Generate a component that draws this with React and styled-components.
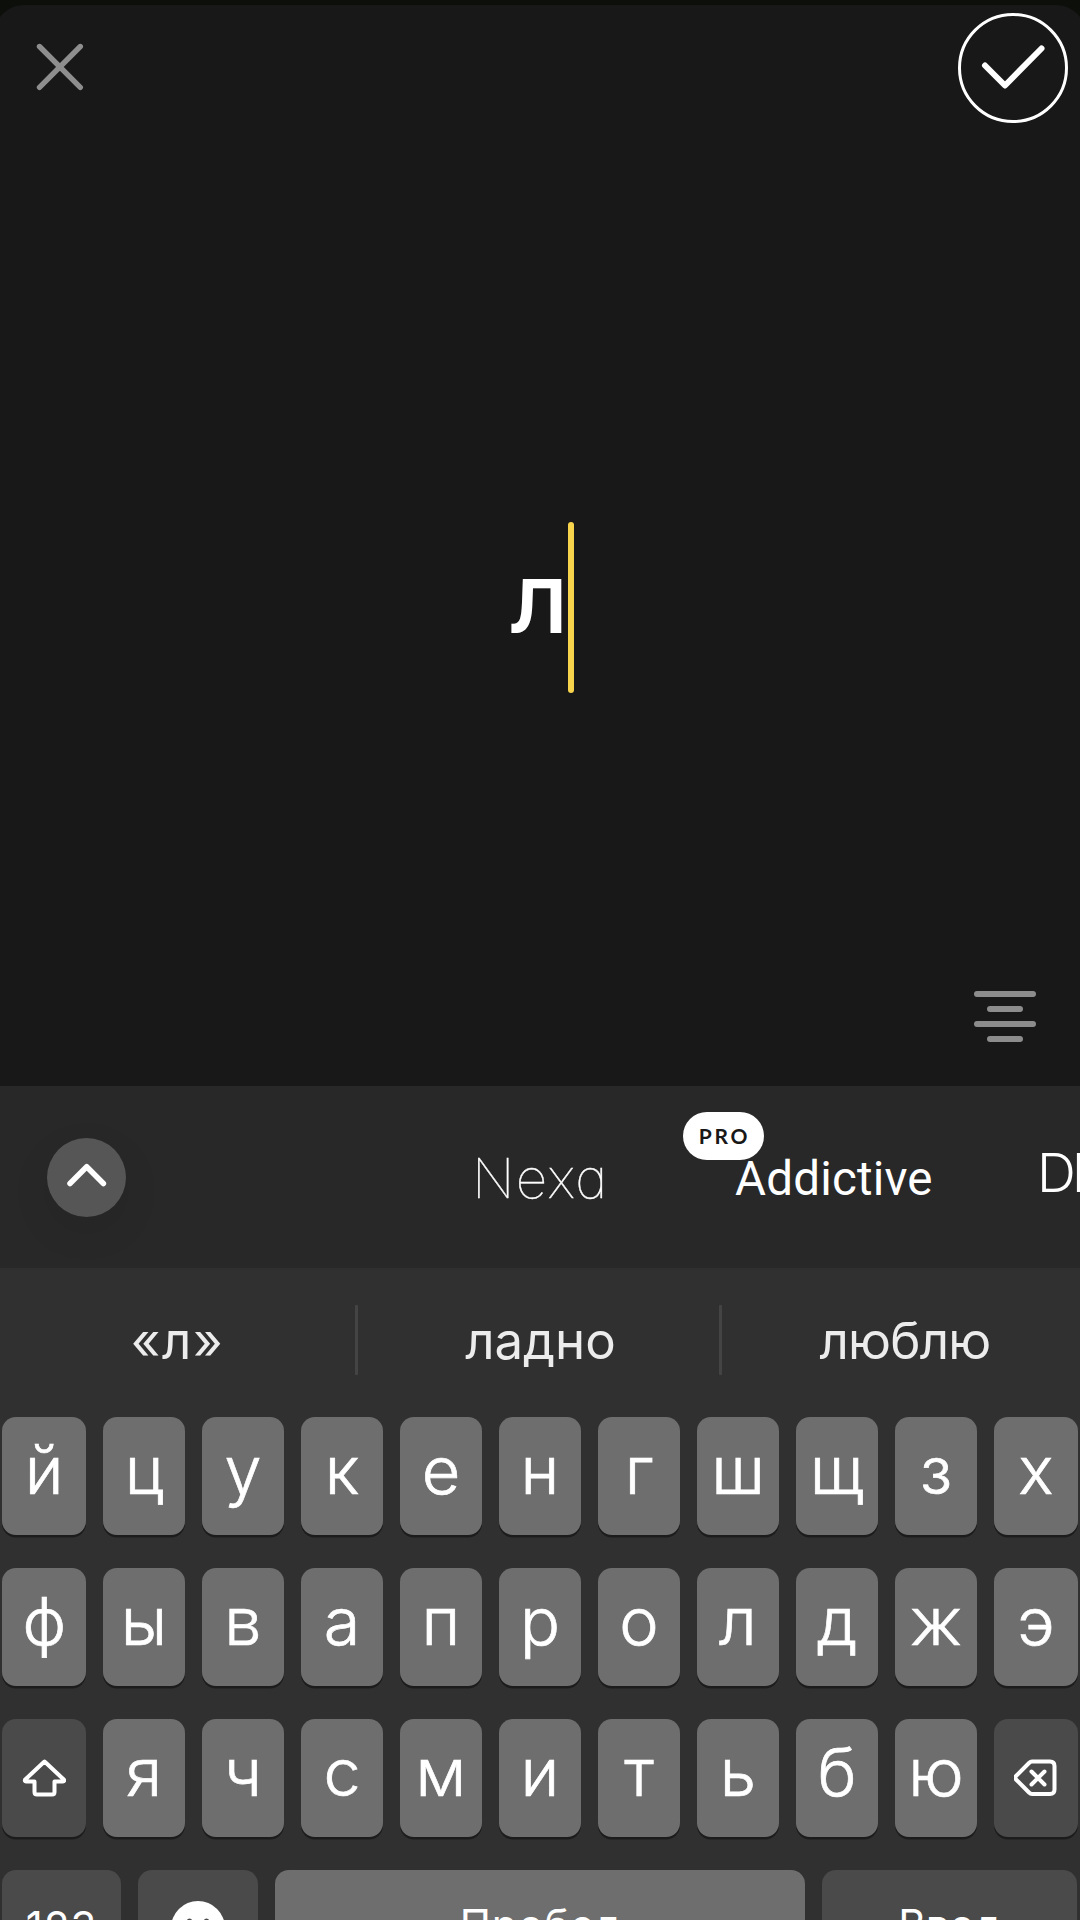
import React from "react";
import styled, { createGlobalStyle } from "styled-components";

const GlobalStyle = createGlobalStyle`
  * { box-sizing: border-box; }
  body { margin: 0; background: #0d0f0a; }
`;

const Screen = styled.div`
  width: 1080px;
  height: 1920px;
  padding-top: 5px;
  overflow: hidden;
  display: flex;
  flex-direction: column;
  background: #0d0f0a;
  color: #fff;
  font-family: Inter, "Noto Sans", sans-serif;
`;

const Sheet = styled.main`
  flex: 0 0 1081px;
  margin: 0 -6px;
  padding: 0 6px;
  border-radius: 30px 30px 0 0;
  background: #181818;
  display: flex;
  flex-direction: column;
`;

const TopBar = styled.header`
  height: 118px;
  padding: 8px 12px 0 36px;
  display: flex;
  justify-content: space-between;
  align-items: flex-start;
`;

const CloseButton = styled.button`
  margin: 30px 0 0;
  padding: 0;
  border: 0;
  background: none;
  line-height: 0;
`;

const ConfirmButton = styled.button`
  width: 110px;
  height: 110px;
  padding: 0;
  border: 3px solid #fff;
  border-radius: 50%;
  background: none;
  line-height: 0;
`;

const Stage = styled.section`
  flex: 1;
  display: flex;
  justify-content: center;
  align-items: flex-start;
  padding: 399px 0 0 5px;
`;

const TypedText = styled.span`
  font-size: 99px;
  font-weight: 500;
  line-height: 151px;
`;

const Caret = styled.span`
  width: 6px;
  height: 171px;
  border-radius: 3px;
  background: #f8d34c;
`;

const AlignRow = styled.div`
  height: 95px;
  padding-right: 44px;
  display: flex;
  justify-content: flex-end;
`;

const AlignButton = styled.button`
  width: 62px;
  height: 51px;
  padding: 0;
  border: 0;
  background: none;
  display: flex;
  flex-direction: column;
  align-items: center;
  justify-content: space-between;
`;

const AlignLine = styled.span`
  width: ${(p) => (p.$short ? 36 : 62)}px;
  height: 6px;
  border-radius: 3px;
  background: #8c8c8c;
`;

const FontBar = styled.nav`
  flex: 0 0 182px;
  padding-left: 47px;
  display: flex;
  align-items: flex-start;
  background: #282828;
`;

const ExpandButton = styled.button`
  flex: 0 0 79px;
  height: 79px;
  margin-top: 52px;
  padding: 0;
  border: 0;
  border-radius: 50%;
  background: #565656;
  box-shadow: 0 14px 40px rgba(0, 0, 0, 0.08);
  line-height: 0;
`;

const FontList = styled.div`
  flex: 1;
  height: 182px;
  padding-left: 346px;
  display: flex;
  overflow: hidden;
  white-space: nowrap;
`;

const FontItem = styled.div`
  position: relative;
  flex: 0 0 ${(p) => p.$width}px;
  line-height: ${(p) => p.$line}px;
`;

const NexaName = styled.span`
  font-size: 55px;
  font-weight: 100;
  font-feature-settings: "cv11";
  letter-spacing: 1.4px;
  -webkit-text-stroke: 0.4px #fff;
`;

const AddictiveName = styled.span`
  font-family: Roboto, sans-serif;
  font-size: 47.5px;
  letter-spacing: 0.2px;
`;

const DinName = styled.span`
  font-size: 54px;
  font-weight: 300;
  letter-spacing: -4px;
`;

const ProBadge = styled.span`
  position: absolute;
  left: -52.5px;
  top: 25.5px;
  width: 81px;
  height: 48px;
  padding-left: 3px;
  border-radius: 24px;
  background: #fff;
  color: #181818;
  font: 700 21px/47px Lato, sans-serif;
  letter-spacing: 2.7px;
  text-align: center;
`;

const Keyboard = styled.section`
  flex: 0 0 652px;
  background: #303030;
`;

const Suggestions = styled.div`
  height: 149px;
  padding: 37px 0 42px;
  display: grid;
  grid-template-rows: 70px;
  grid-template-columns: 355px 3px 361px 3px 358px;
`;

const Suggestion = styled.span`
  padding-left: ${(p) => p.$shift || 0}px;
  color: #ececec;
  font-size: 51px;
  line-height: 72px;
  text-align: center;
  letter-spacing: ${(p) => p.$track || 0}px;
`;

const Divider = styled.span`
  border-radius: 1px;
  background: #444;
`;

const KeyRows = styled.div`
  padding-left: 2.4px;
  display: flex;
  flex-direction: column;
  gap: 33.3px;
`;

const KeyRow = styled.div`
  display: grid;
  grid-template-columns: 83.6px repeat(9, 82px) 84px;
  column-gap: 17px;
`;

const BottomRow = styled(KeyRow)`
  grid-template-columns: 118.6px 120px 530px 255.5px;
`;

const Key = styled.button`
  height: 117.7px;
  padding: 0;
  border: 0;
  border-radius: 14px;
  background: ${(p) => (p.$dark ? "#4a4a4a" : "#6e6e6e")};
  box-shadow: 0 2.5px 0 #1c1c1c;
  color: #fff;
  display: flex;
  justify-content: center;
  align-items: flex-start;
  font: 300 66.5px/107px Inter, "Noto Sans", sans-serif;
  -webkit-text-stroke: 0.7px #fff;
`;

const WordKey = styled(Key)`
  font-size: 42px;
  font-weight: 400;
  line-height: ${(p) => p.$line || 110}px;
  letter-spacing: ${(p) => p.$track || 0}px;
  -webkit-text-stroke: 0;
`;

const IconSlot = styled.span`
  margin-top: ${(p) => p.$top}px;
  line-height: 0;
`;

function ShiftIcon() {
  return (
    <svg width="44" height="40" viewBox="0 0 44 40" fill="none" stroke="#fff" strokeWidth="4" strokeLinejoin="round">
      <path d="M22.500 3.500 L42 21.800 Q42.600 23.500 41 23.500 H32.500 V34 Q32.500 36.500 30 36.500 H15 Q12.500 36.500 12.500 34 V23.500 H4 Q2.400 23.500 3 21.800 Z" />
    </svg>
  );
}

function BackspaceIcon() {
  return (
    <svg width="44" height="40" viewBox="0 0 44 40" fill="none" stroke="#fff" strokeWidth="4" strokeLinejoin="round" strokeLinecap="round">
      <path d="M18 3.500 H36 Q40.500 3.500 40.500 8 V31.500 Q40.500 36 36 36 H18 Q16.500 36 15 34.500 L2 21.500 Q0.500 19.750 2 18 L15 5 Q16.500 3.500 18 3.500 Z" />
      <path d="M17.500 13.500 L30.500 26.500 M30.500 13.500 L17.500 26.500" />
    </svg>
  );
}

function SmileIcon() {
  return (
    <svg width="54" height="54" viewBox="0 0 54 54">
      <circle cx="27" cy="27" r="27" fill="#fff" />
      <ellipse cx="18.500" cy="21.500" rx="3" ry="4" fill="#4a4a4a" />
      <ellipse cx="35.500" cy="21.500" rx="3" ry="4" fill="#4a4a4a" />
      <path d="M14 33 Q27 46 40 33" fill="none" stroke="#4a4a4a" strokeWidth="3" />
    </svg>
  );
}

const FIRST_ROW = [..."йцукенгшщзх"];
const SECOND_ROW = [..."фывапролджэ"];
const THIRD_ROW = [..."ячсмитьбю"];

export default function App() {
  return (
    <Screen>
      <GlobalStyle />
      <Sheet>
        <TopBar>
          <CloseButton aria-label="Закрыть">
            <svg width="48" height="48" viewBox="0 0 48 48" stroke="#8e8e8e" strokeWidth="5.400" strokeLinecap="round">
              <path d="M3.500 3.500 L44.300 44.300 M44.300 3.500 L3.500 44.300" />
            </svg>
          </CloseButton>
          <ConfirmButton aria-label="Готово">
            <svg width="104" height="104" viewBox="0 0 104 104" fill="none" stroke="#fff" strokeWidth="6" strokeLinecap="round" strokeLinejoin="round">
              <path d="M24 49.500 L44 69.500 L80.500 32.500" />
            </svg>
          </ConfirmButton>
        </TopBar>
        <Stage>
          <TypedText>л</TypedText>
          <Caret />
        </Stage>
        <AlignRow>
          <AlignButton aria-label="Выравнивание">
            <AlignLine />
            <AlignLine $short />
            <AlignLine />
            <AlignLine $short />
          </AlignButton>
        </AlignRow>
      </Sheet>

      <FontBar>
        <ExpandButton aria-label="Развернуть">
          <svg width="79" height="79" viewBox="0 0 79 79" fill="none" stroke="#fff" strokeWidth="5.500" strokeLinecap="round" strokeLinejoin="round">
            <path d="M23 45.500 L39.700 28.700 L56.400 45.500" />
          </svg>
        </ExpandButton>
        <FontList>
          <FontItem $width={263} $line={184}>
            <NexaName>Nexa</NexaName>
          </FontItem>
          <FontItem $width={302} $line={186}>
            <AddictiveName>Addictive</AddictiveName>
            <ProBadge>PRO</ProBadge>
          </FontItem>
          <FontItem $width={90} $line={174}>
            <DinName>DI</DinName>
          </FontItem>
        </FontList>
      </FontBar>

      <Keyboard>
        <Suggestions>
          <Suggestion $track={1.5}>«л»</Suggestion>
          <Divider />
          <Suggestion $shift={4}>ладно</Suggestion>
          <Divider />
          <Suggestion $shift={8} $track={-0.8}>люблю</Suggestion>
        </Suggestions>
        <KeyRows>
          <KeyRow>
            {FIRST_ROW.map((letter) => (
              <Key key={letter}>{letter}</Key>
            ))}
          </KeyRow>
          <KeyRow>
            {SECOND_ROW.map((letter) => (
              <Key key={letter}>{letter}</Key>
            ))}
          </KeyRow>
          <KeyRow>
            <Key $dark aria-label="Shift">
              <IconSlot $top={39}>
                <ShiftIcon />
              </IconSlot>
            </Key>
            {THIRD_ROW.map((letter) => (
              <Key key={letter}>{letter}</Key>
            ))}
            <Key $dark aria-label="Удалить">
              <IconSlot $top={39}>
                <BackspaceIcon />
              </IconSlot>
            </Key>
          </KeyRow>
          <BottomRow>
            <WordKey $dark $line={114} $track={1}>123</WordKey>
            <Key $dark aria-label="Эмодзи">
              <IconSlot $top={31}>
                <SmileIcon />
              </IconSlot>
            </Key>
            <WordKey $track={0.8}>Пробел</WordKey>
            <WordKey $dark>Ввод</WordKey>
          </BottomRow>
        </KeyRows>
      </Keyboard>
    </Screen>
  );
}
